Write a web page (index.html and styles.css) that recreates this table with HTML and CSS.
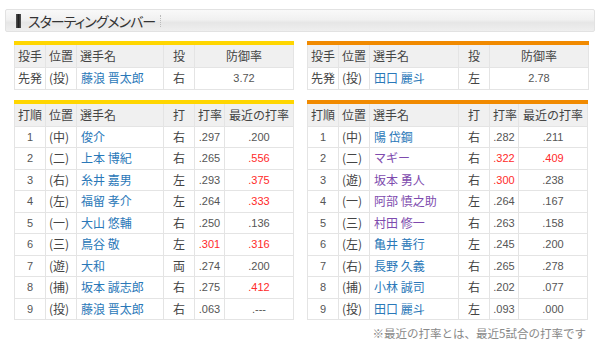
FILE: index.html
```html
<!DOCTYPE html>
<html lang="ja">
<head>
<meta charset="utf-8">
<link rel="stylesheet" href="styles.css">
</head>
<body>
<div class="page">
  <div class="title-bar">
    <span class="title-mark"></span>
    <span class="title-text">スターティングメンバー</span>
    <span class="title-dots"></span>
  </div>
  <div class="teams">
    <div class="team team-tigers">
      <table class="tbl">
        <colgroup><col class="c1"><col class="c2"><col class="c3"><col class="c4"><col class="c56"></colgroup>
        <tr class="head"><th class="l">投手</th><th class="l">位置</th><th class="l">選手名</th><th>投</th><th>防御率</th></tr>
        <tr><td class="l">先発</td><td class="l">(投)</td><td class="l name">藤浪 晋太郎</td><td>右</td><td class="num">3.72</td></tr>
      </table>
      <table class="tbl lineup">
        <colgroup><col class="c1"><col class="c2"><col class="c3"><col class="c4"><col class="c5"><col class="c6"></colgroup>
        <tr class="head"><th class="l">打順</th><th class="l">位置</th><th class="l">選手名</th><th>打</th><th>打率</th><th>最近の打率</th></tr>
        <tr><td class="num">1</td><td class="l">(中)</td><td class="l name">俊介</td><td>右</td><td class="num">.297</td><td class="num">.200</td></tr>
        <tr><td class="num">2</td><td class="l">(二)</td><td class="l name">上本 博紀</td><td>右</td><td class="num">.265</td><td class="num hot">.556</td></tr>
        <tr><td class="num">3</td><td class="l">(右)</td><td class="l name">糸井 嘉男</td><td>左</td><td class="num">.293</td><td class="num hot">.375</td></tr>
        <tr><td class="num">4</td><td class="l">(左)</td><td class="l name">福留 孝介</td><td>左</td><td class="num">.264</td><td class="num hot">.333</td></tr>
        <tr><td class="num">5</td><td class="l">(一)</td><td class="l name">大山 悠輔</td><td>右</td><td class="num">.250</td><td class="num">.136</td></tr>
        <tr><td class="num">6</td><td class="l">(三)</td><td class="l name">鳥谷 敬</td><td>左</td><td class="num hot">.301</td><td class="num hot">.316</td></tr>
        <tr><td class="num">7</td><td class="l">(遊)</td><td class="l name">大和</td><td>両</td><td class="num">.274</td><td class="num">.200</td></tr>
        <tr><td class="num">8</td><td class="l">(捕)</td><td class="l name">坂本 誠志郎</td><td>右</td><td class="num">.275</td><td class="num hot">.412</td></tr>
        <tr><td class="num">9</td><td class="l">(投)</td><td class="l name">藤浪 晋太郎</td><td>右</td><td class="num">.063</td><td class="num">.---</td></tr>
      </table>
    </div>
    <div class="team team-giants">
      <table class="tbl">
        <colgroup><col class="c1"><col class="c2"><col class="c3g"><col class="c4"><col class="c56"></colgroup>
        <tr class="head"><th class="l">投手</th><th class="l">位置</th><th class="l">選手名</th><th>投</th><th>防御率</th></tr>
        <tr><td class="l">先発</td><td class="l">(投)</td><td class="l name">田口 麗斗</td><td>左</td><td class="num">2.78</td></tr>
      </table>
      <table class="tbl lineup">
        <colgroup><col class="c1"><col class="c2"><col class="c3g"><col class="c4"><col class="c5g"><col class="c6"></colgroup>
        <tr class="head"><th class="l">打順</th><th class="l">位置</th><th class="l">選手名</th><th>打</th><th>打率</th><th>最近の打率</th></tr>
        <tr><td class="num">1</td><td class="l">(中)</td><td class="l name">陽 岱鋼</td><td>右</td><td class="num">.282</td><td class="num">.211</td></tr>
        <tr><td class="num">2</td><td class="l">(二)</td><td class="l name visited">マギー</td><td>右</td><td class="num hot">.322</td><td class="num hot">.409</td></tr>
        <tr><td class="num">3</td><td class="l">(遊)</td><td class="l name visited">坂本 勇人</td><td>右</td><td class="num hot">.300</td><td class="num">.238</td></tr>
        <tr><td class="num">4</td><td class="l">(一)</td><td class="l name visited">阿部 慎之助</td><td>左</td><td class="num">.264</td><td class="num">.167</td></tr>
        <tr><td class="num">5</td><td class="l">(三)</td><td class="l name visited">村田 修一</td><td>右</td><td class="num">.263</td><td class="num">.158</td></tr>
        <tr><td class="num">6</td><td class="l">(左)</td><td class="l name">亀井 善行</td><td>左</td><td class="num">.245</td><td class="num">.200</td></tr>
        <tr><td class="num">7</td><td class="l">(右)</td><td class="l name">長野 久義</td><td>右</td><td class="num">.265</td><td class="num">.278</td></tr>
        <tr><td class="num">8</td><td class="l">(捕)</td><td class="l name">小林 誠司</td><td>右</td><td class="num">.202</td><td class="num">.077</td></tr>
        <tr><td class="num">9</td><td class="l">(投)</td><td class="l name">田口 麗斗</td><td>左</td><td class="num">.093</td><td class="num">.000</td></tr>
      </table>
      <p class="note">※最近の打率とは、最近5試合の打率です</p>
    </div>
  </div>
</div>
</body>
</html>
```
FILE: styles.css
```css
html, body {
  margin: 0;
  padding: 0;
  background: #fff;
}
body {
  font-family: "Noto Sans CJK JP", "Noto Sans", sans-serif;
  color: #444;
}
.page {
  padding: 9px 5px 0 5px;
}
.title-bar {
  height: 21px;
  border: 1px solid #e2e2e2;
  border-radius: 2px;
  background: linear-gradient(#f9f9f9 0%, #f1f1f1 45%, #e6e6e6 60%, #efefef 100%);
  display: flex;
  align-items: center;
  padding-left: 10px;
}
.title-mark {
  width: 5px;
  height: 14px;
  background: linear-gradient(90deg, #555 0%, #222 50%, #555 100%);
  margin-right: 7px;
}
.title-text {
  font-size: 14px;
  color: #333;
  letter-spacing: -1px;
  font-feature-settings: "palt";
  line-height: 1;
}
.title-dots {
  width: 0;
  height: 12px;
  border-left: 1px dotted #bbb;
  margin-left: 5px;
}
.teams {
  display: grid;
  grid-template-columns: 279px 279px;
  column-gap: 14px;
  padding-left: 9px;
  margin-top: 9px;
}
.tbl {
  width: 279px;
  border-collapse: collapse;
  table-layout: fixed;
  font-size: 12px;
  line-height: 14px;
  border-top: 4px solid #ffd600;
}
.team-giants .tbl {
  border-top-color: #f18a00;
}
.lineup {
  margin-top: 10px;
}
.c1 { width: 31px; }
.c2 { width: 31px; }
.c3 { width: 87px; }
.c3g { width: 89px; }
.c4 { width: 31px; }
.c56 { width: 99px; }
.c5 { width: 30px; }
.c5g { width: 29px; }
.c6 { width: 69px; }
.tbl th, .tbl td {
  border: 1px solid #e4e4e4;
  padding: 0 3px;
  text-align: center;
  font-weight: normal;
  white-space: nowrap;
  overflow: hidden;
}
.tbl th {
  background: #f0f0f0;
  height: 22px;
  color: #444;
}
.tbl td {
  height: 20.5px;
  color: #444;
}
.tbl .l {
  text-align: left;
}
.tbl td.name {
  padding-left: 4px;
  color: #2a78b8;
}
.tbl td.name.visited {
  color: #7e4bae;
}
.tbl td.num {
  font-family: "Liberation Sans", Arial, sans-serif;
  font-size: 11px;
  color: #555;
}
.tbl td.hot {
  color: #ff2a2a;
}
.note {
  margin: 6px 0 0 0;
  text-align: right;
  font-size: 11.5px;
  color: #888;
  line-height: 14px;
}
```
